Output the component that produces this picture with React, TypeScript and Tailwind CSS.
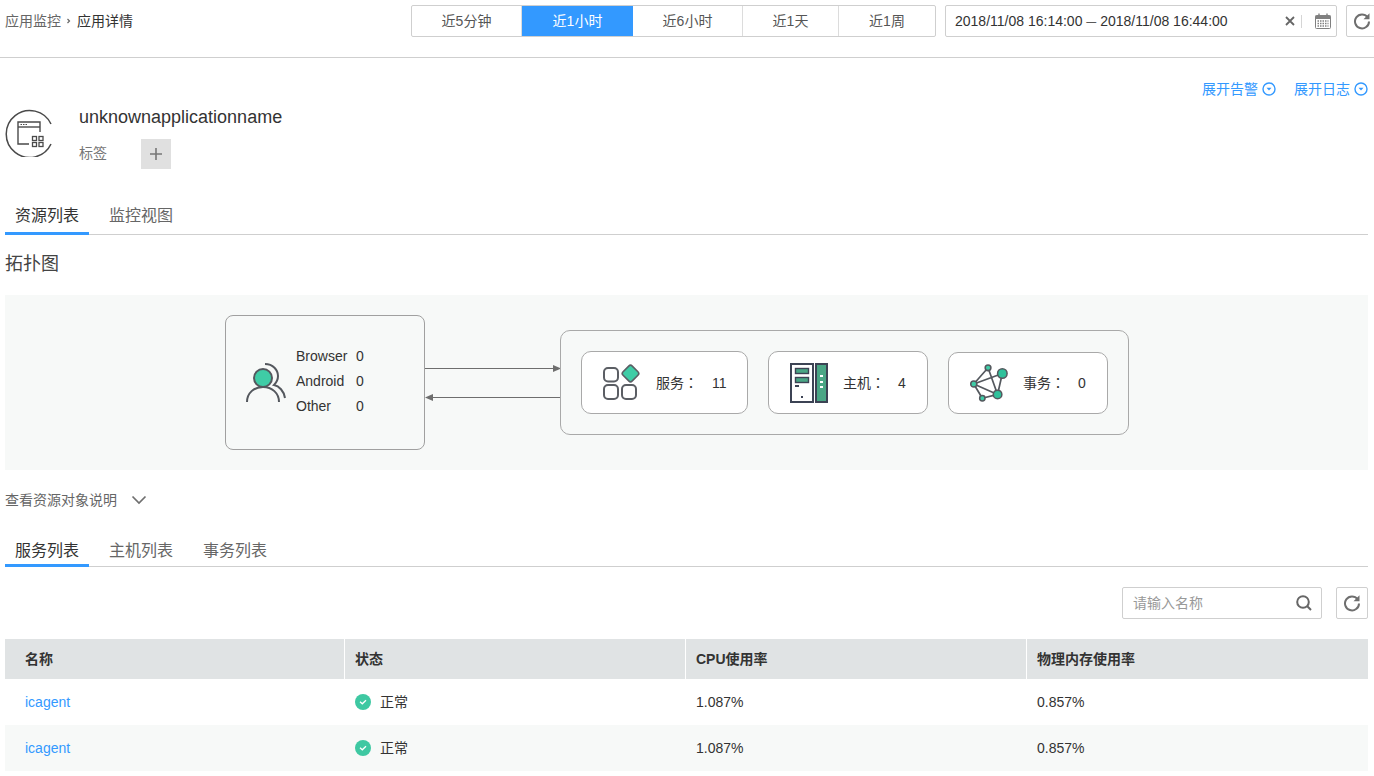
import React from "react";

const FONT = { fontFamily: '"Liberation Sans", "Noto Sans CJK SC", sans-serif' };

function Refresh() {
  return (
    <svg width="18" height="18" viewBox="0 0 18 18" fill="none">
      <path d="M14.600 5.200A7 7 0 1 0 16 9.400" stroke="#6f6f6f" strokeWidth="2" />
      <path d="M16.500 1.200v6h-6z" fill="#6f6f6f" />
    </svg>
  );
}

function ExpandIcon() {
  return (
    <svg width="14" height="14" viewBox="0 0 14 14" fill="none">
      <circle cx="7" cy="7" r="6" stroke="#3399ff" strokeWidth="1.400" />
      <path d="M4.500 5.700h5L7 8.500z" fill="#3399ff" />
    </svg>
  );
}

function AppIcon() {
  return (
    <svg width="50" height="50" viewBox="0 0 50 50" fill="none">
      <path d="M46 17A23.500 23.500 0 1 0 46 37" stroke="#4a4a4a" strokeWidth="1.500" />
      <path d="M35 25V15H13v22h11" stroke="#4a4a4a" strokeWidth="1.400" />
      <path d="M13 20h22" stroke="#4a4a4a" strokeWidth="1.400" />
      <path d="M15.500 17.500h1.500m1 0h1.500m1 0h1.500" stroke="#4a4a4a" strokeWidth="1" />
      <rect x="27.500" y="29.500" width="4" height="4" stroke="#4a4a4a" strokeWidth="1.300" />
      <rect x="34" y="29.500" width="4" height="4" stroke="#4a4a4a" strokeWidth="1.300" />
      <rect x="27.500" y="35.500" width="4" height="4" stroke="#4a4a4a" strokeWidth="1.300" />
      <rect x="34" y="35.500" width="4" height="4" stroke="#4a4a4a" strokeWidth="1.300" />
    </svg>
  );
}

function UserIcon() {
  return (
    <svg width="42" height="42" viewBox="0 0 42 42" fill="none">
      <circle cx="18" cy="17" r="9" fill="#3fcca6" stroke="#54585e" strokeWidth="2" />
      <path d="M2 41c0-9 7-15 16-15s16 6 16 15" stroke="#54585e" strokeWidth="2" />
      <path d="M20 3c8 0 13 6 13 12 0 4-2 7-4 9 5 1 10 6 11 13" stroke="#54585e" strokeWidth="2" />
    </svg>
  );
}

function ServiceIcon() {
  return (
    <svg width="38" height="38" viewBox="0 0 38 38" fill="none">
      <rect x="2" y="4" width="14" height="13.500" rx="4" stroke="#5b5e64" strokeWidth="2" />
      <rect x="2" y="21" width="14" height="14" rx="4" stroke="#5b5e64" strokeWidth="2" />
      <rect x="20" y="21" width="14" height="14" rx="4" stroke="#5b5e64" strokeWidth="2" />
      <rect x="22" y="3" width="13" height="13" rx="2.500" transform="rotate(45 28.500 9.500)" fill="#3fcca6" stroke="#5b5e64" strokeWidth="1.600" />
    </svg>
  );
}

function HostIcon() {
  return (
    <svg width="38" height="40" viewBox="0 0 38 40" fill="none">
      <rect x="1" y="1" width="22" height="38" fill="#fff" stroke="#3c4354" strokeWidth="2" />
      <rect x="26" y="1" width="11" height="38" fill="#4aa685" stroke="#3c4354" strokeWidth="2" />
      <rect x="5.500" y="5.500" width="13" height="5" fill="#4aa685" stroke="#3c4354" strokeWidth="1.400" />
      <rect x="5.500" y="14.500" width="13" height="5" fill="#4aa685" stroke="#3c4354" strokeWidth="1.400" />
      <rect x="5" y="22" width="4" height="2" fill="#3c4354" />
      <rect x="11" y="33" width="2" height="2" fill="#3c4354" />
      <rect x="30" y="12" width="3" height="2" fill="#fff" />
      <rect x="30" y="18" width="3" height="2" fill="#fff" />
      <rect x="30" y="23" width="3" height="2" fill="#fff" />
    </svg>
  );
}

function TxIcon() {
  return (
    <svg width="42" height="40" viewBox="0 0 42 40" fill="none">
      <path d="M5 21 20 4l10 28-16 4zM5 21l30-11-5 22zM5 21l9 15" stroke="#54585e" strokeWidth="1.800" strokeLinejoin="round" />
      <circle cx="5" cy="21" r="3.200" fill="#3fcca6" stroke="#54585e" strokeWidth="1.600" />
      <circle cx="20" cy="4" r="3" fill="#3fcca6" stroke="#54585e" strokeWidth="1.600" />
      <circle cx="35" cy="10" r="5" fill="#2fc19b" stroke="#54585e" strokeWidth="1.600" />
      <circle cx="30" cy="32" r="4.500" fill="#2fc19b" stroke="#54585e" strokeWidth="1.600" />
      <circle cx="14" cy="36" r="2.800" fill="#3fcca6" stroke="#54585e" strokeWidth="1.600" />
    </svg>
  );
}

function Ok() {
  return (
    <span className="flex items-center gap-[9px] text-[#333]">
      <svg width="16" height="16" viewBox="0 0 16 16" fill="none">
        <circle cx="8" cy="8" r="8" fill="#3ec8a2" />
        <path d="M5 7.800l2.300 2L11 6.300" stroke="#fff" strokeWidth="1.300" />
      </svg>
      正常
    </span>
  );
}

function Tabs({ items, lead }: { items: string[]; lead: string }) {
  return (
    <div className="flex h-[32px] border-b border-[#cfcfcf] text-[16px] text-[#666]">
      {items.map((t, i) => (
        <div
          key={t}
          className={
            i === 0
              ? `h-[32px] w-[84px] border-b-[3px] border-[#3399ff] pl-[10px] text-[#333] ${lead}`
              : `h-[32px] w-[94px] pl-[20px] ${lead}`
          }
        >
          {t}
        </div>
      ))}
    </div>
  );
}

function Card({ w, icon, pl, gap, label, value, h }: { w: string; icon: React.ReactNode; pl: string; gap: string; label: string; value: string; h: string }) {
  return (
    <div className={`flex items-center rounded-[10px] border border-[#a9a9a9] bg-white ${w} ${h} ${pl}`}>
      <span className="flex w-[40px] shrink-0 justify-center">{icon}</span>
      <span className={`flex items-center pt-px text-[14px] text-[#333] ${gap}`}>
        <span className="w-[42px] whitespace-nowrap">
          {label}
          <span className="font-['Noto_Sans_CJK_TC']">：</span>
        </span>
        <span>{value}</span>
      </span>
    </div>
  );
}

const RANGES = [
  { t: "近5分钟", w: "w-[110px]" },
  { t: "近1小时", w: "w-[111px]" },
  { t: "近6小时", w: "w-[110px]" },
  { t: "近1天", w: "w-[96px]" },
  { t: "近1周", w: "w-[96px]" },
];

export default function App() {
  return (
    <div className="h-[776px] w-[1374px] overflow-hidden bg-white" style={FONT}>
      <header className="flex h-[58px] border-b border-[#cfcfcf] pl-[5px] pt-[5px]">
        <div className="flex h-[32px] w-[406px] shrink-0 items-center text-[14px]">
          <span className="text-[#666]">应用监控</span>
          <svg width="16" height="10" viewBox="0 0 16 10" fill="none"><path d="M6.500 3l2 2-2 2" stroke="#666" strokeWidth="1.200" /></svg>
          <span className="text-[#333]">应用详情</span>
        </div>
        <div className="flex h-[32px] w-[525px] shrink-0 overflow-hidden rounded-[2px] border border-[#cfcfcf] text-[14px]">
          {RANGES.map((r, i) => (
            <div
              key={r.t}
              className={`flex shrink-0 items-center justify-center ${r.w} ${i === 1 ? "bg-[#3399ff] text-white" : "border-r border-[#dcdcdc] text-[#555] last:border-r-0"}`}
            >
              {r.t}
            </div>
          ))}
        </div>
        <div className="ml-[9px] flex h-[32px] w-[392px] shrink-0 items-center rounded-[2px] border border-[#cfcfcf] pl-[9px] text-[14px] text-[#333]">
          <span className="w-[330px] whitespace-nowrap">2018/11/08 16:14:00 <span className="inline-block -translate-y-px text-[10px]">—</span> 2018/11/08 16:44:00</span>
          <svg width="10" height="10" viewBox="0 0 10 10" fill="none" className="shrink-0">
            <path d="M1 1l8 8m0-8-8 8" stroke="#666" strokeWidth="1.800" />
          </svg>
          <span className="ml-[6px] h-[13px] w-px shrink-0 bg-[#d5d5d5]" />
          <svg width="16" height="16" viewBox="0 0 16 16" fill="none" className="ml-[13px] shrink-0">
            <rect x="0.500" y="2.500" width="15" height="13" rx="1" fill="#fff" stroke="#808080" />
            <rect x="0.500" y="2.500" width="15" height="3.500" fill="#808080" />
            <path d="M4 0.500v3M12 0.500v3" stroke="#808080" strokeWidth="1.400" />
            <path d="M2.500 8h11M2.500 10.500h11M2.500 13h11" stroke="#808080" strokeWidth="1.300" strokeDasharray="1.500 1" />
          </svg>
        </div>
        <div className="ml-[9px] flex h-[32px] w-[32px] shrink-0 items-center justify-center rounded-[2px] border border-[#cfcfcf]">
          <Refresh />
        </div>
      </header>

      <main className="w-[1368px] pl-[5px]">
        <div className="flex h-[40px] items-end justify-end gap-[18px] text-[14px] leading-[18px] text-[#3399ff]">
          <span className="flex items-center gap-[4px]">展开告警<ExpandIcon /></span>
          <span className="flex items-center gap-[4px]">展开日志<ExpandIcon /></span>
        </div>

        <div className="flex h-[71px] pt-[7px]">
          <div className="w-[74px] pt-[2px]"><AppIcon /></div>
          <div>
            <div className="text-[18px] leading-[24px] text-[#333]">unknownapplicationname</div>
            <div className="mt-[10px] flex items-center">
              <span className="w-[62px] pb-[2px] text-[14px] text-[#777]">标签</span>
              <span className="flex h-[30px] w-[30px] items-center justify-center bg-[#e0e0e0]">
                <svg width="14" height="14" viewBox="0 0 14 14" fill="none"><path d="M7 1v12M1 7h12" stroke="#777" strokeWidth="1.600" /></svg>
              </span>
            </div>
          </div>
        </div>

        <div className="mt-[34px]"><Tabs items={["资源列表", "监控视图"]} lead="leading-[25px]" /></div>

        <h2 className="mt-[17px] h-[43px] text-[18px] leading-[24px] font-normal text-[#444]">拓扑图</h2>

        <section className="flex h-[175px] items-center bg-[#f7f9f8] pl-[220px]">
          <div className="flex h-[135px] w-[200px] shrink-0 items-center rounded-[8px] border border-[#a0a0a0] pb-[2px] pl-[19px]">
            <UserIcon />
            <div className="ml-[9px] text-[14px] leading-[25px] text-[#333]">
              {["Browser", "Android", "Other"].map((n) => (
                <div key={n} className="flex">
                  <span className="w-[60px]">{n}</span>
                  <span>0</span>
                </div>
              ))}
            </div>
          </div>
          <svg width="135" height="40" viewBox="0 0 135 40" fill="none" className="shrink-0">
            <path d="M0 5.500h128" stroke="#6e6e6e" />
            <path d="M128 2l8 3.500-8 3.500z" fill="#6e6e6e" />
            <path d="M8 34.500h127" stroke="#6e6e6e" />
            <path d="M8 31 0 34.500 8 38z" fill="#6e6e6e" />
          </svg>
          <div className="flex h-[105px] w-[569px] shrink-0 items-center gap-[20px] rounded-[10px] border border-[#a9a9a9] pl-[20px]">
            <Card w="w-[167px]" h="h-[63px]" pl="pl-[19px]" gap="gap-[14px] ml-[15px]" label="服务" value="11" icon={<ServiceIcon />} />
            <Card w="w-[160px]" h="h-[63px]" pl="pl-[20px]" gap="gap-[13px] ml-[14px]" label="主机" value="4" icon={<HostIcon />} />
            <Card w="w-[160px]" h="h-[62px]" pl="pl-[20px]" gap="gap-[13px] ml-[14px]" label="事务" value="0" icon={<TxIcon />} />
          </div>
        </section>

        <div className="flex h-[60px] items-center text-[14px] text-[#666]">
          <span>查看资源对象说明</span>
          <svg width="16" height="10" viewBox="0 0 16 10" fill="none" className="ml-[14px]"><path d="M1.500 1.500 8 8l6.500-6.500" stroke="#6f6f6f" strokeWidth="1.700" /></svg>
        </div>

        <div className="mt-[5px]"><Tabs items={["服务列表", "主机列表", "事务列表"]} lead="leading-[31px]" /></div>

        <div className="mt-[20px] flex h-[32px] justify-end gap-[14px]">
          <div className="flex w-[200px] items-center justify-between rounded-[2px] border border-[#cfcfcf] pl-[10px] pr-[8px] text-[14px] text-[#999]">
            请输入名称
            <svg width="18" height="18" viewBox="0 0 18 18" fill="none">
              <circle cx="8" cy="8" r="5.800" stroke="#666" strokeWidth="2" />
              <path d="M12.300 12.300 16 16" stroke="#666" strokeWidth="2" />
            </svg>
          </div>
          <div className="flex w-[32px] items-center justify-center rounded-[2px] border border-[#cfcfcf]"><Refresh /></div>
        </div>

        <table className="mt-[20px] w-[1363px] table-fixed border-separate border-spacing-0 text-[14px] text-[#333]">
          <thead>
            <tr className="h-[40px] bg-[#e0e3e4] text-left">
              <th className="w-[340px] border-r border-white pl-[20px] font-bold">名称</th>
              <th className="w-[341px] border-r border-white pl-[10px] font-bold">状态</th>
              <th className="w-[341px] border-r border-white pl-[10px] font-bold">CPU使用率</th>
              <th className="pl-[10px] font-bold">物理内存使用率</th>
            </tr>
          </thead>
          <tbody>
            {["bg-white", "bg-[#f7f9f8]"].map((bg) => (
              <tr key={bg} className={`h-[46px] ${bg}`}>
                <td className="pl-[20px] text-[#3399ff]">icagent</td>
                <td className="pl-[10px]"><Ok /></td>
                <td className="pl-[10px]">1.087%</td>
                <td className="pl-[10px]">0.857%</td>
              </tr>
            ))}
          </tbody>
        </table>
      </main>
    </div>
  );
}
